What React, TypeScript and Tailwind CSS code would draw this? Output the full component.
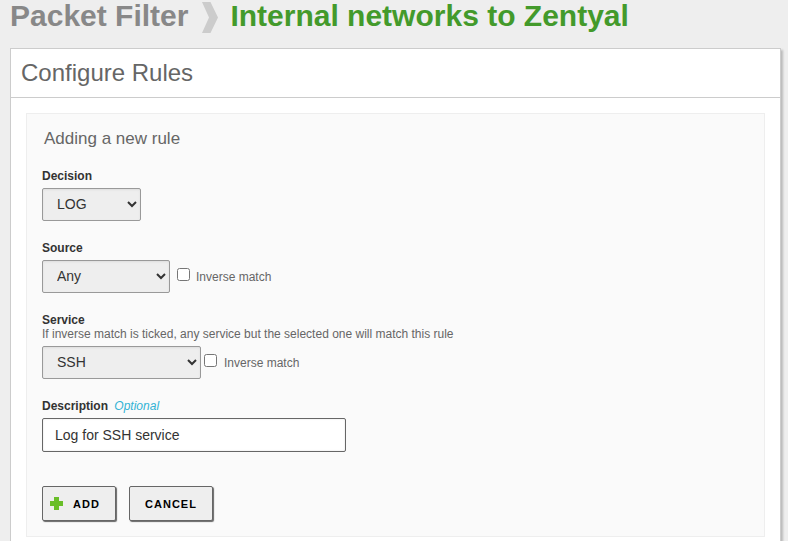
import type { ReactNode } from 'react';

const selectClass =
  'block h-[33px] shrink-0 rounded-[2px] border border-[#999] bg-[#eee] pb-[2px] pl-[10px] text-[14px] text-[#333] shadow-[inset_0_1px_2px_#ddd]';

function Label({ children }: { children: ReactNode }) {
  return <label className="block text-[12px] leading-[14px] font-bold text-[#333]">{children}</label>;
}

function InverseMatch({ className }: { className: string }) {
  return (
    <label className={`flex items-start text-[12px] leading-[14px] ${className}`}>
      <input type="checkbox" className="size-[13px] shrink-0" />
      <span className="mt-[2px]">Inverse match</span>
    </label>
  );
}

export default function App() {
  return (
    <div className="h-[541px] w-[788px] overflow-hidden bg-[#eee] pl-[10px] font-['Liberation_Sans',Arial,sans-serif] text-[#666]">
      <h1 className="flex h-[48px] items-start text-[30px] leading-[32px] font-bold whitespace-nowrap">
        <span className="text-[#888]">Packet Filter</span>
        <svg className="mt-[2px] ml-[14px] h-[31px] w-[16px] shrink-0" viewBox="0 0 16 31" fill="#ccc">
          <path d="M0 0H8.5L16 15.5L8.5 31H0L7 15.5Z" />
        </svg>
        <span className="ml-[12px] text-[#439a2b]">Internal networks to Zentyal</span>
      </h1>

      <main className="h-[520px] w-[771px] border border-[#ccc] bg-white shadow-[2px_2px_2px_#bbb]">
        <h2 className="h-[49px] border-b border-[#ccc] pl-[10px] text-[24px] leading-[48px]">Configure Rules</h2>
        <form className="mt-[15px] ml-[15px] h-[424px] w-[739px] border border-[#eee] bg-[#fafafa] pl-[15px]">
          <h3 className="h-[55px] pt-[15px] pl-[2px] text-[17px] leading-[20px]">Adding a new rule</h3>

          <div className="h-[72px]">
            <Label>Decision</Label>
            <select className={`${selectClass} mt-[5px] w-[99px]`}>
              <option>LOG</option>
            </select>
          </div>

          <div className="h-[72px]">
            <Label>Source</Label>
            <div className="mt-[5px] flex items-start">
              <select className={`${selectClass} w-[128px]`}>
                <option>Any</option>
              </select>
              <InverseMatch className="mt-[8px] ml-[7px] gap-[6px]" />
            </div>
          </div>

          <div className="h-[86px]">
            <Label>Service</Label>
            <p className="text-[12px] leading-[14px]">
              If inverse match is ticked, any service but the selected one will match this rule
            </p>
            <div className="mt-[5px] flex items-start">
              <select className={`${selectClass} w-[159px]`}>
                <option>SSH</option>
              </select>
              <InverseMatch className="mt-[8px] ml-[3px] gap-[7px]" />
            </div>
          </div>

          <div className="h-[87px]">
            <Label>
              Description <em className="ml-[3px] font-normal text-[#32b3d5]">Optional</em>
            </Label>
            <input
              type="text"
              defaultValue="Log for SSH service"
              className="mt-[5px] block h-[34px] w-[304px] rounded-[2px] border border-[#666] bg-white px-[12px] text-[14px] text-[#333] shadow-[inset_0_0_2px_#ddd]"
            />
          </div>

          <div className="flex gap-[13px] text-[11px] font-bold tracking-[1px] text-black">
            <button
              type="button"
              className="flex h-[35px] w-[74px] items-center rounded-[2px] border border-[#666] bg-[#eee] pl-[7px] shadow-[1px_1px_1px_#666]"
            >
              <svg className="size-[13px]" viewBox="0 0 13 13" fill="#69be28">
                <path d="M4 0H9V4H13V9H9V13H4V9H0V4H4Z" />
              </svg>
              <span className="ml-[10px] pt-[2px]">ADD</span>
            </button>
            <button
              type="button"
              className="h-[35px] w-[84px] rounded-[2px] border border-[#666] bg-[#eee] pt-[2px] shadow-[1px_1px_1px_#666]"
            >
              CANCEL
            </button>
          </div>
        </form>
      </main>
    </div>
  );
}
